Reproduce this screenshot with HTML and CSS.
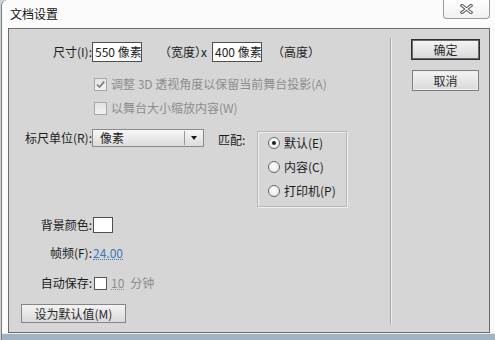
FILE: index.html
```html
<!DOCTYPE html>
<html lang="zh-CN">
<head>
<meta charset="utf-8">
<title>文档设置</title>
<link rel="stylesheet" href="styles.css">
</head>
<body>
<div class="window">
  <div class="titlebar">
    <span class="title">文档设置</span>
    <div class="close">
      <svg width="13" height="10" viewBox="0 0 13 10">
        <path d="M2 1.5 L11 8.5 M11 1.5 L2 8.5" stroke="#5a5a5a" stroke-width="3.2" stroke-linecap="square" fill="none"/>
        <path d="M2 1.5 L11 8.5 M11 1.5 L2 8.5" stroke="#ffffff" stroke-width="1.2" stroke-linecap="square" fill="none"/>
      </svg>
    </div>
  </div>
  <div class="panel">
    <div class="main">
      <div class="row row-size">
        <span class="lbl">尺寸(I):</span>
        <span class="input">550 像素</span>
        <span class="w-label">（宽度）x</span>
        <span class="input">400 像素</span>
        <span class="h-label">（高度）</span>
      </div>
      <div class="row check-row first">
        <span class="cb disabled">
          <svg width="11" height="11" viewBox="0 0 11 11"><path d="M2 5.5 L4.5 8 L9.2 2.6" stroke="#7c7c7c" stroke-width="1.7" fill="none"/></svg>
        </span>
        <span class="dim">调整 3D 透视角度以保留当前舞台投影(A)</span>
      </div>
      <div class="row check-row second">
        <span class="cb disabled"></span>
        <span class="dim">以舞台大小缩放内容(W)</span>
      </div>
      <div class="row row-ruler">
        <span class="lbl lbl-ruler">标尺单位(R):</span>
        <div class="select">
          <span class="select-text">像素</span>
          <span class="select-btn"><span class="arrow"></span></span>
        </div>
        <span class="match">匹配:</span>
        <div class="radio-box">
          <div class="radio-item"><span class="radio on"></span>默认(E)</div>
          <div class="radio-item"><span class="radio"></span>内容(C)</div>
          <div class="radio-item"><span class="radio"></span>打印机(P)</div>
        </div>
      </div>
      <div class="row row-bg">
        <span class="lbl">背景颜色:</span>
        <span class="swatch"></span>
      </div>
      <div class="row row-fps">
        <span class="lbl">帧频(F):</span>
        <span class="link">24.00</span>
      </div>
      <div class="row row-save">
        <span class="lbl">自动保存:</span>
        <span class="cb enabled"></span>
        <span class="dim num">10</span>
        <span class="dim unit">分钟</span>
      </div>
      <div class="row row-default">
        <span class="btn btn-default-val">设为默认值(M)</span>
      </div>
    </div>
    <div class="divider"></div>
    <div class="side">
      <span class="btn btn-ok">确定</span>
      <span class="btn btn-cancel">取消</span>
    </div>
  </div>
  <div class="strip"></div>
</div>
</body>
</html>
```
FILE: styles.css
```css
* { box-sizing: border-box; margin: 0; padding: 0; }
html, body { width: 495px; height: 340px; overflow: hidden; }
body {
  background: #c9d3de;
  font-family: "Noto Sans CJK SC", "Noto Sans", sans-serif;
  font-size: 12px;
  line-height: 1;
  color: #1c1c1c;
}
.window {
  margin-left: 1px;
  width: 494px;
  height: 340px;
  background: #fbfbfb;
  border-left: 1px solid #7d7d7d;
  border-top-left-radius: 6px;
  display: flex;
  flex-direction: column;
}
.titlebar {
  height: 28px;
  display: flex;
  align-items: flex-start;
  flex: none;
}
.title {
  margin-left: 8px;
  line-height: 28px;
  color: #111;
}
.close {
  margin-left: auto;
  margin-right: 5px;
  width: 47px;
  height: 19px;
  border: 1px solid #9a9a9a;
  border-top: none;
  border-radius: 0 0 4px 4px;
  background: linear-gradient(#ffffff, #f1f1f1);
  display: flex;
  align-items: center;
  justify-content: center;
}
.panel {
  margin-left: 6px;
  width: 482px;
  height: 305px;
  border: 1px solid #6c6c6c;
  background: #d6d6d6;
  display: flex;
  flex: none;
}
.strip {
  height: 7px;
  background: #a3b2c3;
  border-top: 1px solid #e8ecf0;
}
.main {
  width: 381px;
  padding-top: 13px;
  display: flex;
  flex-direction: column;
  flex: none;
}
.row { display: flex; align-items: center; flex: none; }
.lbl {
  width: 83px;
  text-align: right;
  white-space: nowrap;
  flex: none;
}
.row-size { height: 20px; }
.input {
  width: 50px;
  height: 20px;
  border: 1px solid #4e4e4e;
  background: #fff;
  padding-left: 2px;
  display: flex;
  align-items: center;
  white-space: nowrap;
  color: #222;
}
.w-label {
  margin-left: 23px;
  width: 47px;
  white-space: nowrap;
  font-feature-settings: "halt";
}
.h-label { margin-left: 10px; white-space: nowrap; }
.check-row { height: 20px; padding-left: 85px; }
.check-row.first { margin-top: 12px; }
.check-row.second { margin-top: 4px; }
.cb {
  width: 13px;
  height: 13px;
  flex: none;
  display: flex;
  align-items: center;
  justify-content: center;
  margin-right: 4px;
}
.cb.disabled {
  border: 1px solid #a7a7a7;
  background: linear-gradient(#e3e3e3, #f2f2f2);
}
.cb.enabled {
  margin-left: 2px;
  border: 1px solid #555;
  background: #fff;
}
.dim { color: #8d8d8d; white-space: nowrap; }
.row-ruler { height: 77px; margin-top: 11px; align-items: flex-start; }
.lbl-ruler { line-height: 18px; }
.select {
  width: 112px;
  height: 18px;
  border: 1px solid #8a8a8a;
  background: linear-gradient(#f6f6f6, #dcdcdc);
  display: flex;
  align-items: center;
  flex: none;
}
.select-text { padding-left: 7px; flex: 1; color: #222; }
.select-btn {
  width: 19px;
  height: 14px;
  border-left: 1px solid #9a9a9a;
  display: flex;
  align-items: center;
  justify-content: center;
}
.arrow {
  width: 0;
  height: 0;
  border-left: 3.5px solid transparent;
  border-right: 3.5px solid transparent;
  border-top: 4px solid #1a1a1a;
}
.match {
  margin-left: 14px;
  width: 39px;
  line-height: 18px;
  margin-top: 2px;
  flex: none;
}
.radio-box {
  width: 90px;
  height: 76px;
  margin-top: 2px;
  border: 1px solid #b8b8b8;
  box-shadow: inset 1px 1px 0 #efefef, 1px 1px 0 #efefef;
  padding-left: 10px;
  display: flex;
  flex-direction: column;
  flex: none;
}
.radio-item {
  height: 24px;
  display: flex;
  align-items: center;
  white-space: nowrap;
}
.radio-item:first-child { margin-top: -1px; }
.radio {
  width: 12px;
  height: 12px;
  border-radius: 50%;
  border: 1px solid #666;
  background: radial-gradient(circle at 40% 35%, #ffffff, #e4e4e4);
  margin-right: 4px;
  flex: none;
  display: flex;
  align-items: center;
  justify-content: center;
}
.radio.on::after {
  content: "";
  width: 4px;
  height: 4px;
  border-radius: 50%;
  background: #1e1e1e;
}
.row-bg { height: 16px; margin-top: 11px; }
.swatch {
  margin-left: 1px;
  width: 20px;
  height: 16px;
  border: 1px solid #505050;
  background: #fff;
}
.row-fps { height: 16px; margin-top: 12px; }
.link {
  margin-left: 1px;
  color: #4376b4;
  border-bottom: 1px dotted #4376b4;
  line-height: 13px;
}
.row-save { height: 16px; margin-top: 14px; }
.num {
  border-bottom: 1px dotted #8d8d8d;
  line-height: 13px;
}
.unit { margin-left: 6px; }
.row-default { height: 19px; margin-top: 13px; padding-left: 12px; }
.btn {
  display: flex;
  align-items: center;
  justify-content: center;
  background: linear-gradient(#f4f4f4, #d9d9d9);
  white-space: nowrap;
  color: #2a2a2a;
  flex: none;
}
.btn-default-val {
  width: 105px;
  height: 19px;
  border: 1px solid #858585;
}
.divider {
  width: 1px;
  background: #a8a8a8;
  margin: 9px 0 7px;
  box-shadow: 1px 0 0 #ececec;
  flex: none;
}
.side {
  padding-top: 10px;
  padding-left: 20px;
  display: flex;
  flex-direction: column;
  align-items: flex-start;
}
.btn-ok {
  width: 69px;
  height: 21px;
  border: 1px solid #2e2e2e;
  box-shadow: inset 0 0 0 1px #6a6a6a;
}
.btn-cancel {
  margin-top: 10px;
  margin-left: 1px;
  width: 67px;
  height: 21px;
  border: 1px solid #7e7e7e;
  box-shadow: inset 0 0 0 1px #eeeeee;
}
```
